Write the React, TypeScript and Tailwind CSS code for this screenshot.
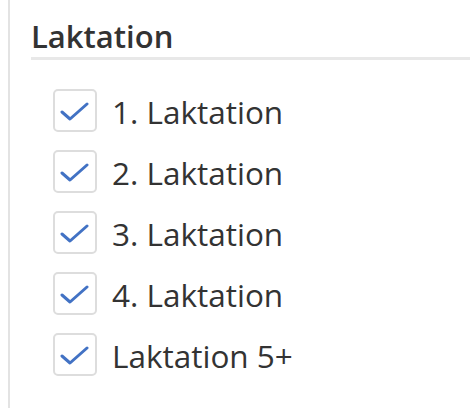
import React from "react";

const items = ["1. Laktation", "2. Laktation", "3. Laktation", "4. Laktation", "Laktation 5+"];

function Check() {
  return (
    <svg width="30" height="20" viewBox="0 0 30 20" fill="none">
      <path d="M2 11 L10 18 L27 3" stroke="#4272c4" strokeWidth="3" strokeLinecap="round" strokeLinejoin="round" />
    </svg>
  );
}

export default function App() {
  return (
    <div className="w-[470px] h-[408px] bg-white overflow-hidden pl-2" style={{ fontFamily: '"Open Sans", sans-serif' }}>
      <div className="h-full border-l-2 border-[#e3e3e3] pl-[21px] pt-[16px]">
        <div className="text-[31px] leading-[40px] font-semibold text-[#333333] border-b-[3px] border-[#e8e8e8] pb-[1px]">
          Laktation
        </div>
        <div className="flex flex-col gap-[18px] pt-[29px] pl-[22px]">
          {items.map((t) => (
            <div key={t} className="flex items-center h-[43px] gap-[15px]">
              <div className="w-[44px] h-[43px] border-2 border-[#dddddd] rounded-[5px] flex items-center justify-center shrink-0">
                <Check />
              </div>
              <span className="text-[31.5px] text-[#333333] leading-[43px] pt-[2px]">{t}</span>
            </div>
          ))}
        </div>
      </div>
    </div>
  );
}
